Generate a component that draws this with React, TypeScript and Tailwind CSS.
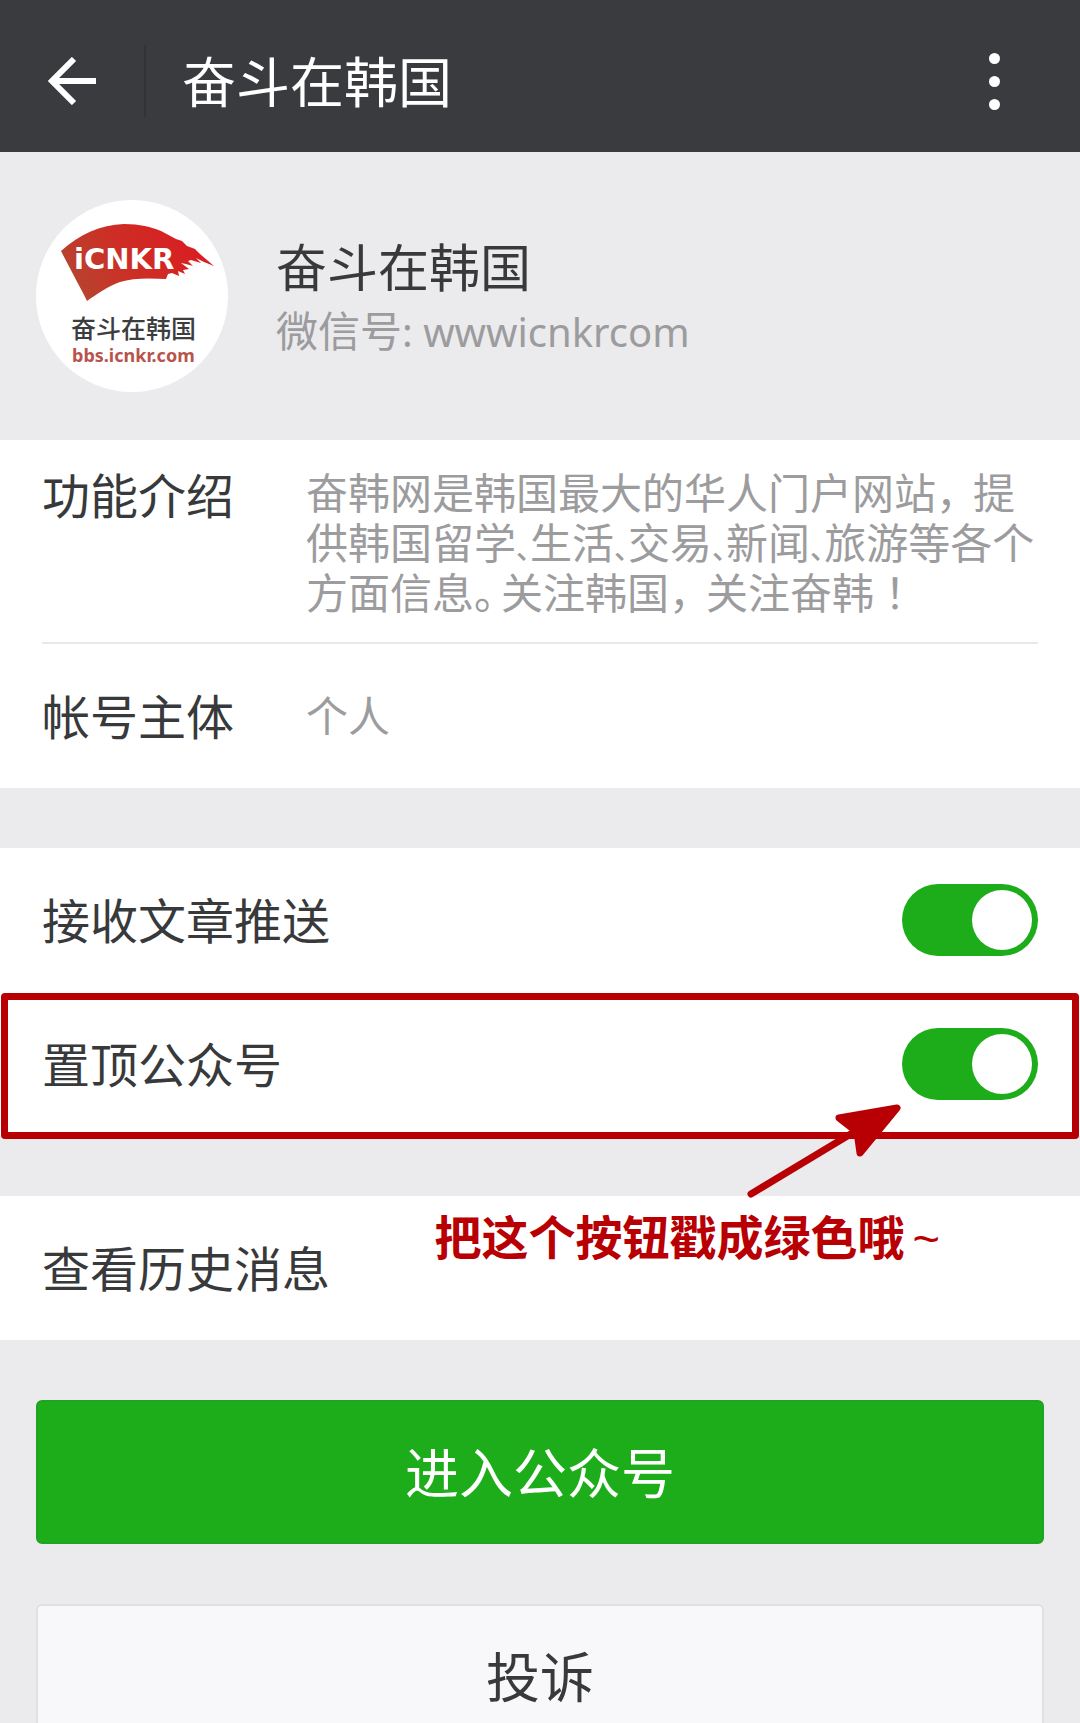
import { useState, type ReactNode } from 'react'

function AccountLogo() {
  return (
    <svg viewBox="0 0 192 192" className="size-48 shrink-0" role="img" aria-label="奋斗在韩国 bbs.icnkr.com">
      <defs>
        <linearGradient id="flag" x1="0" y1="0.6" x2="1" y2="0.3">
          <stop offset="0" stopColor="#b5452f" />
          <stop offset="0.4" stopColor="#cc2f26" />
          <stop offset="1" stopColor="#dc1a20" />
        </linearGradient>
      </defs>
      <circle cx="96" cy="96" r="96" fill="#ffffff" />
      <path
        d="M25 51 C44 34 64 25 88 24 C104 24 115 27 125 31 L140 39 L146 41 L151 46 L159 49 L164 54 L178 66 L168 62 L160 58 L165 63 L155 60 L152 61 L157 66 L150 64 L145 63 L153 69 L147 70 L149 74 L142 71 L143 76 L136 73 L132 74 L130 79 C112 78 96 78 84 82 C72 86 61 94 51 101 C47 92 42 84 37 74 C33 66 29 59 25 51 Z"
        fill="url(#flag)"
      />
      <text x="38" y="69" fontSize="29" fontWeight="700" fill="#ffffff" fontFamily="'DejaVu Sans', sans-serif">
        iCNKR
      </text>
      <text x="35" y="138" fontSize="25" fontWeight="500" fill="#3b3d3e" fontFamily="'Noto Sans CJK SC', sans-serif">
        奋斗在韩国
      </text>
      <text x="36" y="162" fontSize="18" fontWeight="700" fill="#b8544c" fontFamily="'Noto Sans', sans-serif">
        bbs.icnkr.com
      </text>
    </svg>
  )
}

function Switch({ id, checked, onChange }: { id: string; checked: boolean; onChange: (v: boolean) => void }) {
  return (
    <input
      id={id}
      type="checkbox"
      role="switch"
      checked={checked}
      onChange={(e) => onChange(e.target.checked)}
      className="flex h-18 w-34 shrink-0 cursor-pointer appearance-none items-center rounded-full bg-[#c8c8cc] p-1.5 before:size-15 before:rounded-full before:bg-white checked:justify-end checked:bg-[#1dad1a]"
    />
  )
}

function SwitchRow({ id, label, children }: { id: string; label: string; children?: ReactNode }) {
  const [on, setOn] = useState(true)
  return (
    <div className="relative flex h-36 items-center justify-between px-[42px]">
      <label htmlFor={id} className="pb-1">
        {label}
      </label>
      <Switch id={id} checked={on} onChange={setOn} />
      {children}
    </div>
  )
}

function Pause() {
  return <span className="text-[28px] leading-none font-medium [font-feature-settings:'halt']">、</span>
}

function Comma() {
  return <span className="pr-4 [font-feature-settings:'halt']">，</span>
}

export default function App() {
  return (
    <div className="flex h-screen flex-col overflow-y-auto bg-[#ebeaec] font-['Noto_Sans_CJK_SC',sans-serif] text-[48px] leading-[54px] text-[#38393b] [scrollbar-width:none]">
      <header className="flex h-38 shrink-0 items-center bg-[#3a3b3f] pt-2.5 text-white">
        <button type="button" aria-label="返回" className="flex h-18 w-36 items-center pl-12">
          <svg viewBox="0 0 48 48" className="size-12" fill="none" stroke="currentColor" strokeWidth="6">
            <path d="M48 24H5M26 2L4 24L26 46" />
          </svg>
        </button>
        <div className="h-18 w-0.5 bg-[#323338]" />
        <h1 className="flex-1 pb-0.5 pl-9 text-[54px]">奋斗在韩国</h1>
        <button type="button" aria-label="更多" className="mr-14 flex h-18 w-15 flex-col items-center justify-center gap-3">
          <span className="size-[11px] rounded-full bg-white" />
          <span className="size-[11px] rounded-full bg-white" />
          <span className="size-[11px] rounded-full bg-white" />
        </button>
      </header>

      <main>
        <section className="flex h-72 items-center gap-12 px-9">
          <AccountLogo />
          <div className="pt-1">
            <h2 className="text-[51px] leading-16">奋斗在韩国</h2>
            <p className="text-[42px] leading-16 text-[#9c9c9e]">
              微信号<span className="font-['Noto_Sans',sans-serif] text-[40px]">: wwwicnkrcom</span>
            </p>
          </div>
        </section>

        <dl className="bg-white px-[42px]">
          <div className="flex border-b-2 border-[#e8e8e8] py-[26px]">
            <dt className="w-[264px] shrink-0">功能介绍</dt>
            <dd className="flex-1 text-[42px] leading-[50px] text-[#9c9c9e]">
              奋韩网是韩国最大的华人门户网站
              <Comma />
              提供韩国留学
              <Pause />
              生活
              <Pause />
              交易
              <Pause />
              新闻
              <Pause />
              旅游等各个方面信息<span className="pr-1.5 [font-feature-settings:'halt']">。</span>关注韩国
              <Comma />
              关注奋韩<span className="font-['Noto_Sans_CJK_JP',sans-serif]" lang="ja">！</span>
            </dd>
          </div>
          <div className="flex h-36 items-center pb-1">
            <dt className="w-[264px] shrink-0">帐号主体</dt>
            <dd className="text-[42px] text-[#9c9c9e]">个人</dd>
          </div>
        </dl>

        <section className="mt-15 bg-white">
          <SwitchRow id="push" label="接收文章推送" />
          <SwitchRow id="pin" label="置顶公众号">
            <div className="pointer-events-none absolute inset-x-px top-px -bottom-[3px] rounded-sm border-7 border-[#b80004]" />
          </SwitchRow>
        </section>

        <section className="relative mt-15 bg-white">
          <a href="#history" className="flex h-36 items-center px-[42px] pb-1">
            查看历史消息
          </a>
          <svg
            viewBox="0 0 160 100"
            className="pointer-events-none absolute -top-24 right-[176px] h-[100px] w-40"
            fill="#b80004"
            stroke="#b80004"
            strokeWidth="7"
            strokeLinecap="round"
            strokeLinejoin="round"
            aria-hidden="true"
          >
            <path d="M7 94L115 29" />
            <path d="M153 8L95 18L113 32L116 53Z" />
          </svg>
          <p className="absolute top-3 right-[140px] text-[47px] font-bold text-[#b80004]">
            把这个按钮戳成绿色哦<span className="pl-2 font-['Liberation_Sans',sans-serif] font-normal">~</span>
          </p>
        </section>

        <div className="flex flex-col gap-15 px-9 pt-15 text-[54px]">
          <button type="button" className="h-36 rounded-md border-2 border-[#1fa322] bg-[#1dad1a] pb-0.5 text-white">
            进入公众号
          </button>
          <button type="button" className="h-36 rounded-md border-2 border-[#e0dfe1] bg-[#f8f7fa] pb-0.5">
            投诉
          </button>
        </div>
      </main>
    </div>
  )
}
